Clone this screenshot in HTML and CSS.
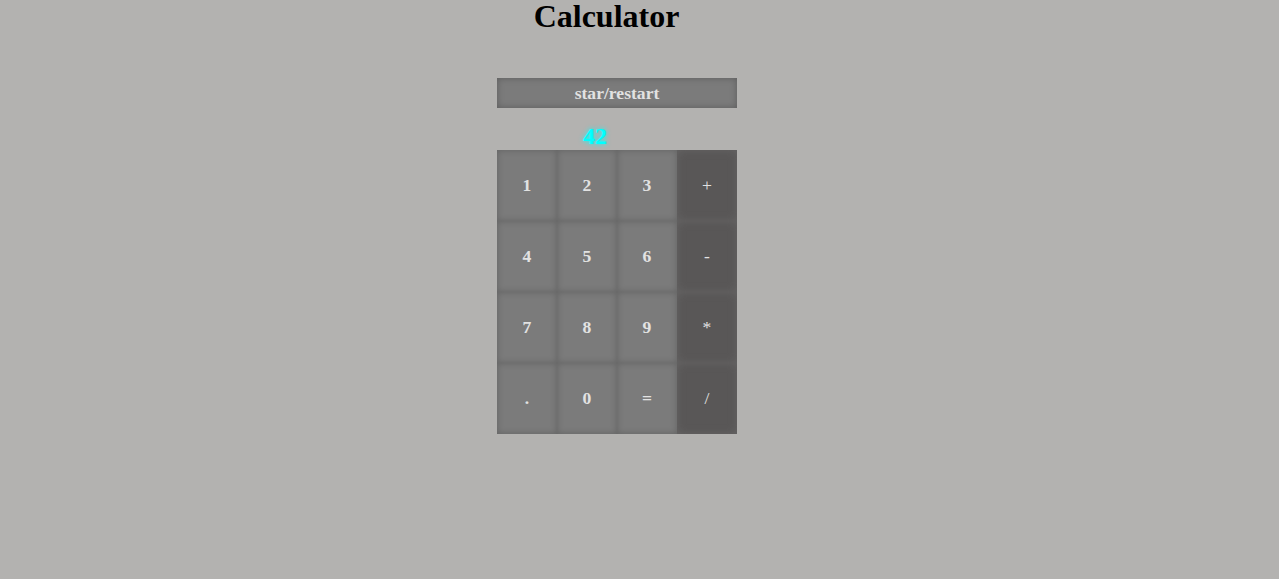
FILE: index.html
```html
<!DOCTYPE html>
<html>
<head>
<meta charset="utf-8">
<link rel="stylesheet" href="styles.css">
</head>
<body>
<h1 class="title">Calculator</h1>
<div class="calc">
  <button class="start">star/restart</button>
  <div class="display">42</div>
  <div class="keys">
    <button class="key">1</button>
    <button class="key">2</button>
    <button class="key">3</button>
    <button class="key op">+</button>
    <button class="key">4</button>
    <button class="key">5</button>
    <button class="key">6</button>
    <button class="key op">-</button>
    <button class="key">7</button>
    <button class="key">8</button>
    <button class="key">9</button>
    <button class="key op">*</button>
    <button class="key">.</button>
    <button class="key">0</button>
    <button class="key">=</button>
    <button class="key op">/</button>
  </div>
</div>
</body>
</html>
```
FILE: styles.css
```css
html, body {
  margin: 0;
  padding: 0;
  background: #b3b2b0;
  font-family: "Liberation Serif", "Times New Roman", serif;
}
.title {
  margin: 0;
  width: 1213px;
  text-align: center;
  font-size: 32px;
  font-weight: bold;
  line-height: 33px;
  color: #000;
}
.calc {
  width: 240px;
  margin: 45px 0 0 497px;
  display: flex;
  flex-direction: column;
}
.start {
  height: 30px;
  width: 240px;
  border: none;
  padding: 0;
  background: #7b7b7b;
  box-shadow: inset 0 0 7px rgba(0,0,0,0.25);
  font-family: "Liberation Serif", serif;
  font-weight: bold;
  font-size: 17.6px;
  color: #e2e2e2;
}
.display {
  height: 42px;
  box-sizing: border-box;
  padding: 16px 0 0 0;
  width: 196px;
  text-align: center;
  font-size: 24px;
  font-weight: bold;
  line-height: 24px;
  color: #00ffff;
  text-shadow: 0 0 5px #00ffff;
}
.keys {
  display: grid;
  grid-template-columns: repeat(4, 60px);
  grid-template-rows: repeat(4, 71px);
}
.key {
  border: none;
  padding: 0;
  background: #7b7b7b;
  box-shadow: inset 0 0 7px rgba(0,0,0,0.2);
  font-family: "Liberation Serif", serif;
  font-weight: bold;
  font-size: 17.6px;
  color: #e2e2e2;
}
.key.op {
  background: #595757;
  font-weight: normal;
  box-shadow: inset 0 0 9px rgba(110,110,110,0.6);
}
```
